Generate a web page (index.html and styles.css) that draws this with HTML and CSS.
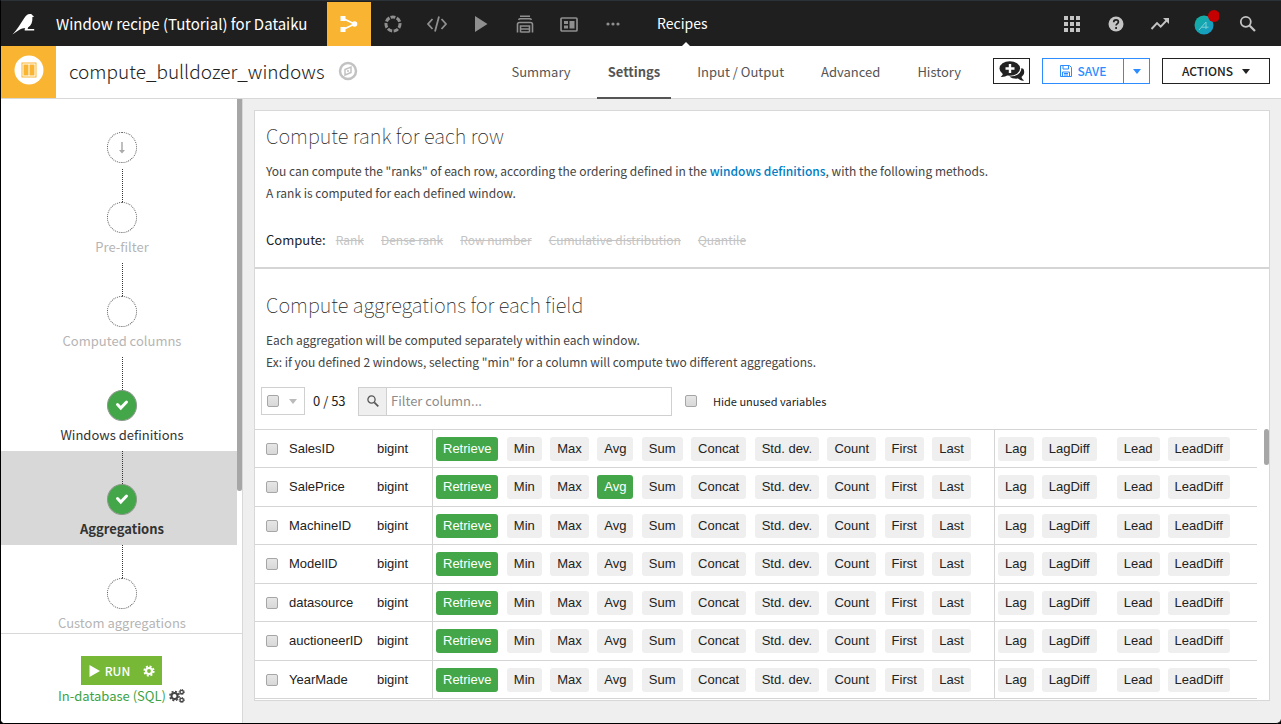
FILE: index.html
```html
<!DOCTYPE html>
<html lang="en">
<head>
<meta charset="utf-8">
<meta name="viewport" content="width=device-width, initial-scale=1">
<title>compute_bulldozer_windows</title>
<link rel="stylesheet" href="styles.css">
</head>
<body>
<div class="app">
  <header class="topbar">
    <a class="logo" href="#" aria-label="Home">
      <svg width="24" height="24" viewBox="0 0 24 24" fill="#fff"><path d="M.5 22.500C5 17.500 8.500 12 12 6.500 14 3.500 15 2 18 2c1.600 0 2.300.700 2.600 1.600l1.700.900-1.900.500c.300 5-1.100 8.500-4.400 10.600l-.300 1.400h6.500V18.500h-9.500V17l.600-.900c-2.300.200-4 .700-5.800 1.700C5 19.200 3 21 .5 22.500z"/></svg>
    </a>
    <a class="project" href="#">Window recipe (Tutorial) for Dataiku</a>
    <nav class="mainnav" aria-label="Sections">
      <a class="navicon navicon-active" href="#" aria-label="Flow"><svg width="20" height="20" viewBox="0 0 20 20"><path d="M4 4.500 15.500 10 4 15.500" fill="none" stroke="#fff" stroke-width="1.800"/><path fill="#fff" d="M1.500 2h5v5h-5zM1.500 13h5v5h-5z"/><circle cx="15.500" cy="10" r="2.800" fill="#fff"/></svg></a>
      <a class="navicon" href="#" aria-label="Lab"><svg width="18" height="18" viewBox="0 0 18 18" fill="none" stroke="currentColor" stroke-width="3"><circle cx="9" cy="9" r="7" stroke-dasharray="4.800 1.480" transform="rotate(-110 9 9)"/></svg></a>
      <a class="navicon" href="#" aria-label="Code"><svg width="22" height="18" viewBox="0 0 22 18" fill="none" stroke="currentColor" stroke-width="1.800"><path d="M6.500 4 2 9l4.500 5M15.500 4 20 9l-4.500 5M13 1.500 9 16.500"/></svg></a>
      <a class="navicon" href="#" aria-label="Jobs"><svg width="14" height="16" viewBox="0 0 14 16" fill="currentColor"><path d="M1 0v16l12.500-8z"/></svg></a>
      <a class="navicon" href="#" aria-label="Deploy"><svg width="18" height="18" viewBox="0 0 18 18" fill="none" stroke="currentColor" stroke-width="1.600"><path d="M4 1.300h10M2.500 4.800C3 4 3.500 3.800 4.500 3.800h9c1 0 1.500.200 2 1M1.500 17.500V9.500q0-2 2-2h11q2 0 2 2v8M4.500 17.500v-6.500h9v6.500M5 14h8M5 17h8"/></svg></a>
      <a class="navicon" href="#" aria-label="Dashboards"><svg width="18" height="15" viewBox="0 0 18 15"><rect x="1" y="1" width="16" height="13" rx="1" fill="none" stroke="currentColor" stroke-width="1.700"/><path fill="currentColor" d="M4 4h4v3H4zM4 8.500h4v3H4zM9.500 4h5v7.500h-5z"/></svg></a>
      <a class="navicon" href="#" aria-label="More"><svg width="14" height="4" viewBox="0 0 14 4" fill="currentColor"><circle cx="2" cy="2" r="1.600"/><circle cx="7" cy="2" r="1.600"/><circle cx="12" cy="2" r="1.600"/></svg></a>
    </nav>
    <a class="section" href="#">Recipes</a>
    <div class="tools">
      <a class="tool" href="#" aria-label="Applications"><svg width="16" height="16" viewBox="0 0 16 16" fill="currentColor"><path d="M0 0h4v4H0zM6 0h4v4H6zM12 0h4v4h-4zM0 6h4v4H0zM6 6h4v4H6zM12 6h4v4h-4zM0 12h4v4H0zM6 12h4v4H6zM12 12h4v4h-4z"/></svg></a>
      <a class="tool" href="#" aria-label="Help"><svg width="16" height="16" viewBox="0 0 16 16"><circle cx="8" cy="8" r="7.500" fill="currentColor"/><path d="M5.700 6.300c0-3.300 4.700-3 4.700-.300 0 1.700-2.300 1.700-2.300 3.600M8.100 11v1.900" fill="none" stroke="#1f1f1f" stroke-width="1.700"/></svg></a>
      <a class="tool" href="#" aria-label="Activity"><svg width="20" height="14" viewBox="0 0 20 14"><path d="M1.500 12 7 6l3.700 3.700L17 3" fill="none" stroke="currentColor" stroke-width="1.900"/><path d="M13 1h6v6z" fill="currentColor"/></svg></a>
      <a class="tool" href="#" aria-label="Profile"><svg width="30" height="30" viewBox="0 0 30 30"><defs><linearGradient id="avatar" x1="0" y1="0" x2="1" y2="1"><stop offset="0" stop-color="#12b09b"/><stop offset="1" stop-color="#1799cc"/></linearGradient></defs><circle cx="15" cy="16" r="9.500" fill="url(#avatar)"/><path d="m10 21 7-8v7M12.500 18.200h7" fill="none" stroke="#7bd0d6" stroke-width="1"/><circle cx="25" cy="7" r="6" fill="#c40000"/></svg></a>
      <a class="tool" href="#" aria-label="Search"><svg width="18" height="18" viewBox="0 0 18 18" fill="none" stroke="currentColor"><circle cx="6.800" cy="6.800" r="5" stroke-width="1.800"/><path d="m10.700 10.700 5.300 5.300" stroke-width="2.200"/></svg></a>
    </div>
  </header>

  <div class="titlebar">
    <div class="recipe-type"><svg width="30" height="30" viewBox="0 0 30 30"><circle cx="15" cy="15" r="14.500" fill="#fff"/><rect x="8" y="8" width="14" height="14" fill="none" stroke="#f9b431" stroke-width="1"/><path fill="#f9b431" d="M9.500 9.500h5v11h-5zM15.500 9.500h5v11h-5z"/></svg></div>
    <h1 class="recipe-name">compute_bulldozer_windows</h1>
    <button class="compass" type="button" aria-label="Navigate"><svg width="20" height="20" viewBox="0 0 20 20" fill="none" stroke="#c2c2c2"><circle cx="10" cy="10" r="8" stroke-width="2.500"/><path d="M7 8.500 13 6v5.500L7 14z" stroke-width="1.500"/><circle cx="10" cy="10" r="1" fill="#c2c2c2" stroke="none"/></svg></button>
    <nav class="tabs" aria-label="Recipe">
      <a class="tab" href="#">Summary</a>
      <a class="tab tab-active" href="#">Settings</a>
      <a class="tab" href="#">Input / Output</a>
      <a class="tab" href="#">Advanced</a>
      <a class="tab" href="#">History</a>
    </nav>
    <div class="actions">
      <button class="btn btn-chat" type="button" aria-label="Discussions"><svg width="26" height="21" viewBox="0 0 26 21"><path fill="#222" d="M24.500 8c1.500 3.500.500 6-2 8 .3 1.500 1.300 2.600 2.700 3.600-2.600.400-4.700-.600-6.200-2-3.500.400-6.500-.400-8.500-2.100C17 15.500 22 13 22.500 7z"/><ellipse cx="10.800" cy="7.500" rx="10.300" ry="7.300" fill="#222"/><path fill="#222" d="M4 11.500c0 2-.8 3.300-2.300 4.500 3 .200 5.300-.600 7.300-2.200z"/><path d="M11 3v9M6.500 7.500h9" stroke="#fff" stroke-width="2.400"/></svg></button>
      <div class="save-group">
        <button class="btn btn-save" type="button"><svg width="12" height="12" viewBox="0 0 12 12" fill="none" stroke="currentColor"><path d="M.5.500h9l2 2v9H.5zM3 .500v3.500h5.500V.500M2.500 11.500V7h7v4.500M4 8.500h4M4 10h4"/></svg>SAVE</button>
        <button class="btn btn-save-menu" type="button" aria-label="Save options"><span class="caret"></span></button>
      </div>
      <button class="btn btn-actions" type="button">ACTIONS<span class="caret"></span></button>
    </div>
  </div>

  <div class="body">
    <aside class="sidebar">
      <div class="steps-scroll">
        <ol class="steps">
          <li class="step step-first"><span class="dot"><svg width="8" height="14" viewBox="0 0 8 14"><path d="M4 1v10" stroke="#aaa" stroke-width="1.500"/><path d="m1 9 3 3.500L7 9z" fill="#aaa"/></svg></span></li>
          <li class="step"><span class="line"></span><span class="dot"></span><a class="step-label" href="#">Pre-filter</a></li>
          <li class="step"><span class="line"></span><span class="dot"></span><a class="step-label" href="#">Computed columns</a></li>
          <li class="step step-done"><span class="line"></span><span class="dot"><svg width="14" height="14" viewBox="0 0 14 14"><path d="M2.500 5.500 5.800 9 11.500 3" fill="none" stroke="#fff" stroke-width="3" stroke-linecap="round"/></svg></span><a class="step-label" href="#">Windows definitions</a></li>
          <li class="step step-done step-current"><span class="line"></span><span class="dot"><svg width="14" height="14" viewBox="0 0 14 14"><path d="M2.500 5.500 5.800 9 11.500 3" fill="none" stroke="#fff" stroke-width="3" stroke-linecap="round"/></svg></span><a class="step-label" href="#">Aggregations</a></li>
          <li class="step"><span class="line"></span><span class="dot"></span><a class="step-label" href="#">Custom aggregations</a></li>
        </ol>
        <div class="scrolltrack"><div class="scrollthumb"></div></div>
      </div>
      <div class="run">
        <div class="run-group">
          <button class="run-btn" type="button"><svg width="11" height="12" viewBox="0 0 11 12" fill="#fff"><path d="M.500 0v12L11 6z"/></svg>RUN</button>
          <button class="run-btn run-gear" type="button" aria-label="Run options"><svg width="12" height="12" viewBox="0 0 12 12" fill="none" stroke="#fff"><circle cx="6" cy="6" r="3" stroke-width="2.200"/><circle cx="6" cy="6" r="4.700" stroke-width="1.800" stroke-dasharray="2 1.690"/></svg></button>
        </div>
        <div class="engine"><a href="#">In-database (SQL)</a><svg width="16" height="14" viewBox="0 0 16 14" fill="none" stroke="#444"><circle cx="5.500" cy="7" r="3" stroke-width="2"/><circle cx="5.500" cy="7" r="4.600" stroke-width="1.500" stroke-dasharray="2 1.610"/><circle cx="12.700" cy="3" r="1.700" stroke-width="1.300"/><circle cx="12.700" cy="3" r="2.600" stroke-width="1" stroke-dasharray="1.200 .840"/><circle cx="12.700" cy="11" r="1.700" stroke-width="1.300"/><circle cx="12.700" cy="11" r="2.600" stroke-width="1" stroke-dasharray="1.200 .840"/></svg></div>
      </div>
    </aside>

    <main class="main">
      <section class="panel">
        <div class="block block-rank">
          <h2>Compute rank for each row</h2>
          <p>You can compute the "ranks" of each row, according the ordering defined in the <a href="#">windows definitions</a>, with the following methods.<br>A rank is computed for each defined window.</p>
          <div class="ranks"><span class="ranks-title">Compute:</span><button type="button">Rank</button><button type="button">Dense rank</button><button type="button">Row number</button><button type="button">Cumulative distribution</button><button type="button">Quantile</button></div>
        </div>
        <div class="block block-agg">
          <h2>Compute aggregations for each field</h2>
          <p>Each aggregation will be computed separately within each window.<br>Ex: if you defined 2 windows, selecting "min" for a column will compute two different aggregations.</p>
        </div>
        <div class="filters">
          <div class="mass"><input type="checkbox" aria-label="Select all columns"><button type="button" aria-label="Selection options"><span class="caret"></span></button></div>
          <span class="count">0 / 53</span>
          <div class="search">
            <label class="search-icon" for="filter" aria-label="Filter"><svg width="12" height="12" viewBox="0 0 12 12" fill="none" stroke="#555"><circle cx="4.500" cy="4.500" r="3.600" stroke-width="1.300"/><path d="m7.300 7.300 4 4" stroke-width="1.700"/></svg></label>
            <input id="filter" type="text" placeholder="Filter column...">
          </div>
          <label class="hide"><input type="checkbox">Hide unused variables</label>
        </div>
        <div class="grid">
          <table class="fields"><tbody id="fields"></tbody></table>
          <div class="gridtrack"><div class="gridthumb"></div></div>
        </div>
      </section>
    </main>
  </div>
</div>
<script src="fields.js"></script>
</body>
</html>
```
FILE: styles.css
```css
* { box-sizing: border-box; }

body {
  margin: 0;
  background: #000;
  color: #222;
  font-family: "Noto Sans CJK SC", "Open Sans", sans-serif;
  font-size: 12px;
  line-height: 22px;
}

a { color: inherit; text-decoration: none; }
button { margin: 0; padding: 0; border: 0; background: none; color: inherit; font: inherit; cursor: pointer; }
svg { display: block; flex: none; }

input[type="checkbox"] {
  appearance: none;
  flex: none;
  width: 12px;
  height: 12px;
  margin: 0;
  border: 1px solid #a6a6a6;
  border-radius: 2px;
  background: linear-gradient(#e6e6e6, #d8d8d8);
}

.caret { border: 4px solid transparent; border-top: 5px solid currentColor; border-bottom: 0; }

.app {
  display: flex;
  flex-direction: column;
  height: 100vh;
  overflow: hidden;
  border: 1px solid #000;
  border-top-color: #2b3238;
  border-right: 0;
  border-radius: 0 0 5px 5px;
  background: #efefef;
}

/* Top navigation */
.topbar {
  display: flex;
  flex: none;
  align-items: stretch;
  height: 45px;
  padding: 1px 11px 0 11px;
  background: #1f1f1f;
  color: #fff;
}
.logo { display: flex; align-items: center; width: 44px; }
.project { width: 271px; font-size: 15px; line-height: 43px; white-space: nowrap; }
.mainnav { display: flex; color: #8f8f8f; }
.navicon, .tool { display: flex; align-items: center; justify-content: center; width: 44px; }
.navicon-active { background: #f9b431; }
.section {
  position: relative;
  margin-left: 22px;
  font-size: 14px;
  line-height: 43px;
}
.section::after {
  content: "";
  position: absolute;
  left: 50%;
  bottom: 0;
  border: 4px solid transparent;
  border-top: 0;
  border-bottom-color: #fff;
}
.tools { display: flex; margin-left: auto; color: #c4c4c4; }

/* Recipe title and tabs */
.titlebar {
  display: flex;
  flex: none;
  align-items: stretch;
  height: 53px;
  padding-right: 11px;
  border-bottom: 1px solid #d8d8d8;
  background: #fff;
}
.recipe-type { display: flex; justify-content: center; width: 55px; padding-top: 9px; background: #f9b431; }
.recipe-name { margin: 0 0 0 13px; font-size: 19px; font-weight: 300; line-height: 50px; }
.compass { height: 50px; margin-left: 13px; }
.tabs { display: flex; gap: 15px; margin-left: auto; color: #555; font-size: 13px; line-height: 52px; }
.tab { padding: 0 11px; white-space: nowrap; }
.tab-active { height: 53px; border-bottom: 2px solid #555; font-weight: 700; }
.actions { display: flex; gap: 12px; margin-left: 21px; padding-top: 12px; }
.btn {
  display: flex;
  align-items: center;
  justify-content: center;
  height: 26px;
  border: 1px solid #222;
}
.btn-chat { width: 37px; }
.save-group { display: flex; color: #2d8cff; font-weight: 500; }
.btn-save { gap: 6px; width: 82px; border-color: currentColor; }
.btn-save-menu { width: 27px; margin-left: -1px; border-color: currentColor; }
.btn-actions { gap: 9px; width: 108px; font-weight: 500; }

/* Step sidebar */
.body { display: flex; flex: 1; min-height: 0; }
.sidebar {
  display: flex;
  flex: none;
  flex-direction: column;
  width: 242px;
  border-right: 1px solid #d8d8d8;
  background: #fff;
}
.steps-scroll { display: flex; flex: 1; min-height: 0; overflow: hidden; }
.steps { flex: 1; margin: 0; padding: 0; list-style: none; }
.step {
  display: flex;
  flex-direction: column;
  align-items: center;
  height: 94px;
  padding-right: 6px;
  padding-left: 12px;
  color: #b5b5b5;
  font-size: 13px;
}
.step-first { height: 70px; padding-top: 33px; }
.line { height: 33px; border-left: 1px dotted #333; }
.dot {
  display: flex;
  flex: none;
  align-items: center;
  justify-content: center;
  width: 30px;
  height: 31px;
  border: 1px dotted #555;
  border-radius: 50%;
}
.step-label { margin-top: 3px; white-space: nowrap; }
.step-done { color: #333; }
.step-done .dot { border: 1px solid #8a9a8a; background: #43a649; }
.step-current { background: #d8d8d8; font-weight: 700; }
.scrolltrack { width: 5px; }
.scrollthumb { height: 392px; border-radius: 0 0 3px 3px; background: #a6a6a6; }
.run {
  display: flex;
  flex: none;
  flex-direction: column;
  align-items: center;
  height: 90px;
  padding-top: 22px;
  border-top: 1px solid #d8d8d8;
}
.run-group { display: flex; height: 29px; background: #77b837; color: #fff; font-weight: 500; }
.run-btn { display: flex; align-items: center; gap: 5px; padding-left: 8px; }
.run-gear { padding: 0 7px 0 13px; }
.engine { display: flex; align-items: center; gap: 3px; color: #3aa345; font-size: 13px; }

/* Settings */
.main { display: flex; flex: 1; min-width: 0; padding: 11px 11px 22px; }
.panel {
  display: flex;
  flex: 1;
  flex-direction: column;
  min-width: 0;
  border: 1px solid #d8d8d8;
  background: #fff;
}
.block { flex: none; padding: 0 11px; }
.block-rank { height: 158px; border-bottom: 2px solid #d5d5d5; }
.block h2 { margin: 0; font-size: 20px; font-weight: 100; line-height: 28px; }
.block-rank h2 { padding: 11px 0 10px; }
.block-agg h2 { padding: 22px 0 10px; }
.block p { margin: 0; color: #444; }
.block p a { color: #007dc4; font-weight: 500; }
.ranks { display: flex; gap: 17px; margin-top: 25px; color: #c4c4c4; }
.ranks button { text-decoration: line-through; }
.ranks .ranks-title { margin-right: -7px; color: #222; font-size: 13px; }

.filters { display: flex; flex: none; align-items: center; height: 56px; padding: 0 6px; }
.mass { display: flex; align-items: center; gap: 10px; width: 44px; height: 28px; padding-left: 5px; border: 1px solid #d0d0d0; color: #bbb; }
.mass button { display: flex; }
.count { width: 53px; padding-left: 8px; font-size: 13px; }
.search { display: flex; width: 314px; height: 29px; border: 1px solid #d0d0d0; }
.search-icon { display: flex; align-items: center; justify-content: center; width: 28px; border-right: 1px solid #d0d0d0; background: #efefef; }
.search input { flex: 1; min-width: 0; padding: 0 4px; border: 0; outline: 0; background: none; font: inherit; font-size: 13px; }
.search input::placeholder { color: #8c8c8c; }
.hide { display: flex; align-items: center; gap: 16px; margin-left: 13px; font-size: 11px; }

/* Field table */
.grid { display: flex; flex: 1; align-items: flex-start; min-height: 0; overflow: hidden; }
.fields {
  flex: 1;
  border-collapse: separate;
  border-spacing: 0;
  font-family: "Liberation Sans", Arial, sans-serif;
  font-size: 13px;
  line-height: 24px;
}
.fields tr { height: 38px; }
.fields tr:nth-child(even), .fields tr:last-child { height: 39px; }
.fields td { padding: 0; border: 0 solid #d5d5d5; border-top-width: 1px; white-space: nowrap; }
.fields tr:last-child td { border-bottom-width: 1px; }
.fields .name { width: 122px; padding-left: 11px; }
.fields .name label { display: flex; align-items: center; gap: 11px; }
.fields .type { width: 55px; }
.fields .aggs { width: 562px; padding-right: 23px; padding-left: 3px; border-left-width: 1px; }
.fields .aggs .chips { justify-content: space-between; gap: 0; }
.fields .lags { padding-left: 3px; border-left-width: 1px; }
.chips { display: flex; gap: 8px; }
.chip { padding: 0 7px; border-radius: 3px; background: #efefef; }
.chip-on { background: #43a649; color: #fff; }
.chip-lead { margin-left: 12px; }
.gridtrack { display: flex; justify-content: flex-end; width: 12px; }
.gridthumb { width: 5px; height: 36px; border-radius: 3px; background: #a6a6a6; }
```
FILE: fields.js
```js
const aggregations = ["Retrieve", "Min", "Max", "Avg", "Sum", "Concat", "Std. dev.", "Count", "First", "Last"];
const offsets = ["Lag", "LagDiff", "Lead", "LeadDiff"];
const fields = [
  { name: "SalesID", on: ["Retrieve"] },
  { name: "SalePrice", on: ["Retrieve", "Avg"] },
  { name: "MachineID", on: ["Retrieve"] },
  { name: "ModelID", on: ["Retrieve"] },
  { name: "datasource", on: ["Retrieve"] },
  { name: "auctioneerID", on: ["Retrieve"] },
  { name: "YearMade", on: ["Retrieve"] }
];

function chips(labels, on) {
  const buttons = labels.map((label) => {
    const active = on.includes(label);
    const classes = ["chip"];
    if (active) classes.push("chip-on");
    if (label === "Lead") classes.push("chip-lead");
    return `<button type="button" class="${classes.join(" ")}" aria-pressed="${active}">${label}</button>`;
  });
  return `<div class="chips">${buttons.join("")}</div>`;
}

document.getElementById("fields").innerHTML = fields.map((field) => `<tr>
  <td class="name"><label><input type="checkbox">${field.name}</label></td>
  <td class="type">bigint</td>
  <td class="aggs">${chips(aggregations, field.on)}</td>
  <td class="lags">${chips(offsets, field.on)}</td>
</tr>`).join("");
```
